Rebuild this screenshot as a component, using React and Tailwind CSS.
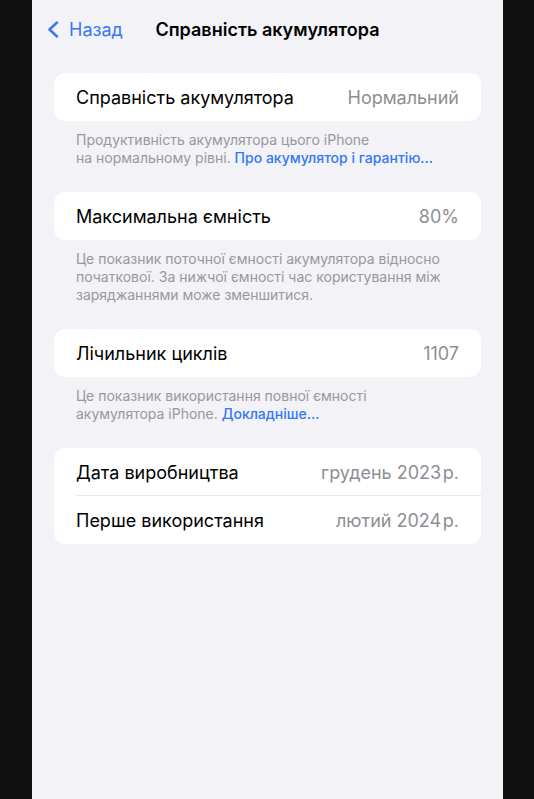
import React from "react";

function Row({ label, value, divider }) {
  return (
    <div className="relative flex h-[48px] items-center justify-between px-[22px]">
      <span className="text-[18px] text-black">{label}</span>
      <span className="text-[18px] text-[#8e8e93]">{value}</span>
      {divider ? (
        <div className="absolute bottom-0 left-[22px] right-0 h-px bg-[#e6e6eb]" />
      ) : null}
    </div>
  );
}

function Footer({ children }) {
  return (
    <p className="px-[22px] pt-[10px] pb-[25px] text-[14px] leading-[18px] text-[#98989d]">
      {children}
    </p>
  );
}

export default function App() {
  return (
    <div
      className="flex h-screen w-full bg-[#111111]"
      style={{ fontFamily: "Inter, 'Noto Sans', sans-serif" }}
    >
      <div className="w-[32px] shrink-0" />
      <div className="flex flex-1 flex-col bg-[#f2f2f7]">
        {/* nav */}
        <div className="relative flex h-[58px] items-center">
          <button type="button" className="flex items-center gap-[10px] pl-[15px] text-[#3478f6]">
            <svg width="12" height="17" viewBox="0 0 12 17" fill="none">
              <path
                d="M10 1.5 L2.5 8.5 L10 15.5"
                stroke="#3478f6"
                strokeWidth="2.4"
                strokeLinecap="round"
                strokeLinejoin="round"
              />
            </svg>
            <span className="text-[18px]">Назад</span>
          </button>
          <div className="absolute left-1/2 -translate-x-1/2 text-[18px] font-semibold text-black whitespace-nowrap">
            Справність акумулятора
          </div>
        </div>

        <div className="px-[22px] pt-[15px]">
          <div className="rounded-[11px] bg-white">
            <Row label="Справність акумулятора" value="Нормальний" />
          </div>
          <Footer>
            Продуктивність акумулятора цього iPhone
            <br />
            на нормальному рівні.{" "}
            <span className="font-medium text-[#3478f6]">Про акумулятор і гарантію…</span>
          </Footer>

          <div className="rounded-[11px] bg-white">
            <Row label="Максимальна ємність" value="80%" />
          </div>
          <Footer>
            Це показник поточної ємності акумулятора відносно початкової. За нижчої ємності час
            користування між заряджаннями може зменшитися.
          </Footer>

          <div className="rounded-[11px] bg-white">
            <Row label="Лічильник циклів" value="1107" />
          </div>
          <Footer>
            Це показник використання повної ємності
            <br />
            акумулятора iPhone.{" "}
            <span className="font-medium text-[#3478f6]">Докладніше…</span>
          </Footer>

          <div className="overflow-hidden rounded-[11px] bg-white">
            <Row label="Дата виробництва" value={"грудень 2023\u200Aр."} divider />
            <Row label="Перше використання" value={"лютий 2024\u200Aр."} />
          </div>
        </div>
      </div>
      <div className="w-[31px] shrink-0" />
    </div>
  );
}
